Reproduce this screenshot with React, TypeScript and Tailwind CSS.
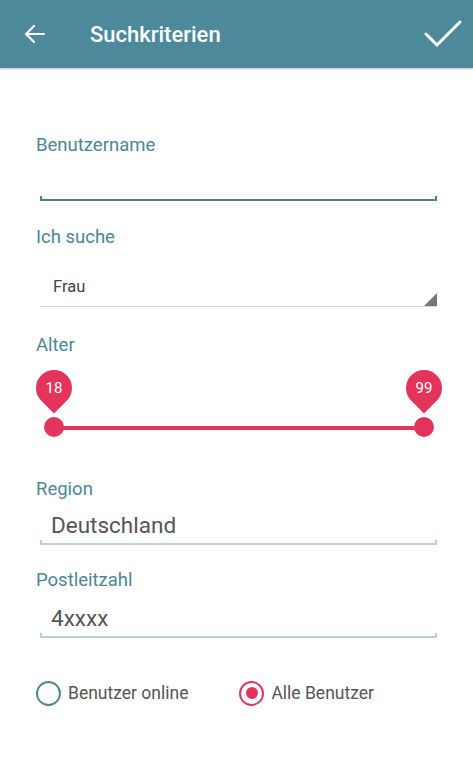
import { useState } from "react";

const font = { fontFamily: "Roboto, 'Noto Sans', sans-serif" };

function Underline({ color }: { color: string }) {
  return <div className={`ml-1 h-[5px] border-x-2 border-b-2 ${color}`} />;
}

function Pin({ value, left }: { value: number; left: string }) {
  return (
    <div className={`absolute top-0 ${left} flex flex-col items-center`}>
      <div className="relative h-[44px] w-[36px]">
        <svg width="36" height="44" viewBox="0 0 36 44" className="absolute inset-0">
          <path d="M18 43.5 L5.27 30.73 A18 18 0 1 1 30.73 30.73 Z" fill="#e5345b" />
        </svg>
        <span className="absolute left-0 top-0 flex h-[36px] w-[36px] items-center justify-center text-[15px] text-white">
          {value}
        </span>
      </div>
      <div className="mt-[3px] h-[20px] w-[20px] rounded-full bg-[#e5345b]" />
    </div>
  );
}

export default function App() {
  const [all, setAll] = useState(true);

  return (
    <div className="min-h-screen bg-white" style={font}>
      {/* Toolbar */}
      <div className="flex h-[68px] items-center bg-[#4c8a9b] shadow-[0_1px_2px_rgba(0,0,0,0.25)]">
        <svg width="24" height="24" viewBox="0 0 24 24" className="ml-[23px]" fill="none" stroke="white" strokeWidth="2.2" strokeLinecap="round" strokeLinejoin="round">
          <path d="M21 12H3M11 4l-8 8 8 8" />
        </svg>
        <h1 className="ml-[43px] flex-1 text-[22px] font-medium text-white">Suchkriterien</h1>
        <svg width="40" height="30" viewBox="0 0 40 30" className="mr-[10px]" fill="none" stroke="white" strokeWidth="3" strokeLinecap="round" strokeLinejoin="round">
          <path d="M3 15l11 11L37 3" />
        </svg>
      </div>

      <div className="pl-[36px] pr-[36px]">
        <p className="mt-[65px] text-[18.5px] leading-[24px] text-[#4b8794]">Benutzername</p>
        <div className="h-[39px]" />
        <Underline color="border-[#4f7f8c]" />

        <p className="mt-[24px] text-[18.5px] leading-[24px] text-[#4b8794]">Ich suche</p>
        <div className="ml-1 mt-[28px] flex items-end border-b border-[#d6d6d6]">
          <span className="mb-[9px] ml-[13px] flex-1 text-[16.5px] leading-[20px] text-[#444]">Frau</span>
          <span className="h-0 w-0 border-b-[13px] border-l-[13px] border-b-[#777] border-l-transparent" />
        </div>

        <p className="mt-[26px] text-[18.5px] leading-[24px] text-[#4b8794]">Alter</p>
        <div className="relative mt-[13px] h-[71px]">
          <div className="absolute left-[18px] right-[13px] top-[56px] h-[4px] bg-[#e5345b]" />
          <Pin value={18} left="left-0" />
          <Pin value={99} left="right-[-5px]" />
        </div>

        <p className="mt-[36px] text-[18.5px] leading-[24px] text-[#4b8794]">Region</p>
        <p className="ml-[15px] mt-[10px] text-[22.5px] leading-[28px] text-[#555]">Deutschland</p>
        <div className="h-[1px]" />
        <Underline color="border-[#b4d4d8]" />

        <p className="mt-[23px] text-[18.5px] leading-[24px] text-[#4b8794]">Postleitzahl</p>
        <p className="ml-[15px] mt-[12px] text-[22.5px] leading-[28px] text-[#555]">4xxxx</p>
        <div className="h-[1px]" />
        <Underline color="border-[#b4d4d8]" />

        <div className="mt-[42px] flex items-center">
          <button onClick={() => setAll(false)} className="flex items-center">
            <span className={`flex h-[25px] w-[25px] items-center justify-center rounded-full border-2 ${all ? "border-[#4b8a90]" : "border-[#e5345b]"}`}>
              {!all && <span className="h-[12px] w-[12px] rounded-full bg-[#e5345b]" />}
            </span>
            <span className="ml-[7px] text-[17.5px] text-[#555]">Benutzer online</span>
          </button>
          <button onClick={() => setAll(true)} className="ml-[51px] flex items-center">
            <span className={`flex h-[25px] w-[25px] items-center justify-center rounded-full border-2 ${all ? "border-[#e5345b]" : "border-[#4b8a90]"}`}>
              {all && <span className="h-[12px] w-[12px] rounded-full bg-[#e5345b]" />}
            </span>
            <span className="ml-[7px] text-[17.5px] text-[#555]">Alle Benutzer</span>
          </button>
        </div>
      </div>
    </div>
  );
}
